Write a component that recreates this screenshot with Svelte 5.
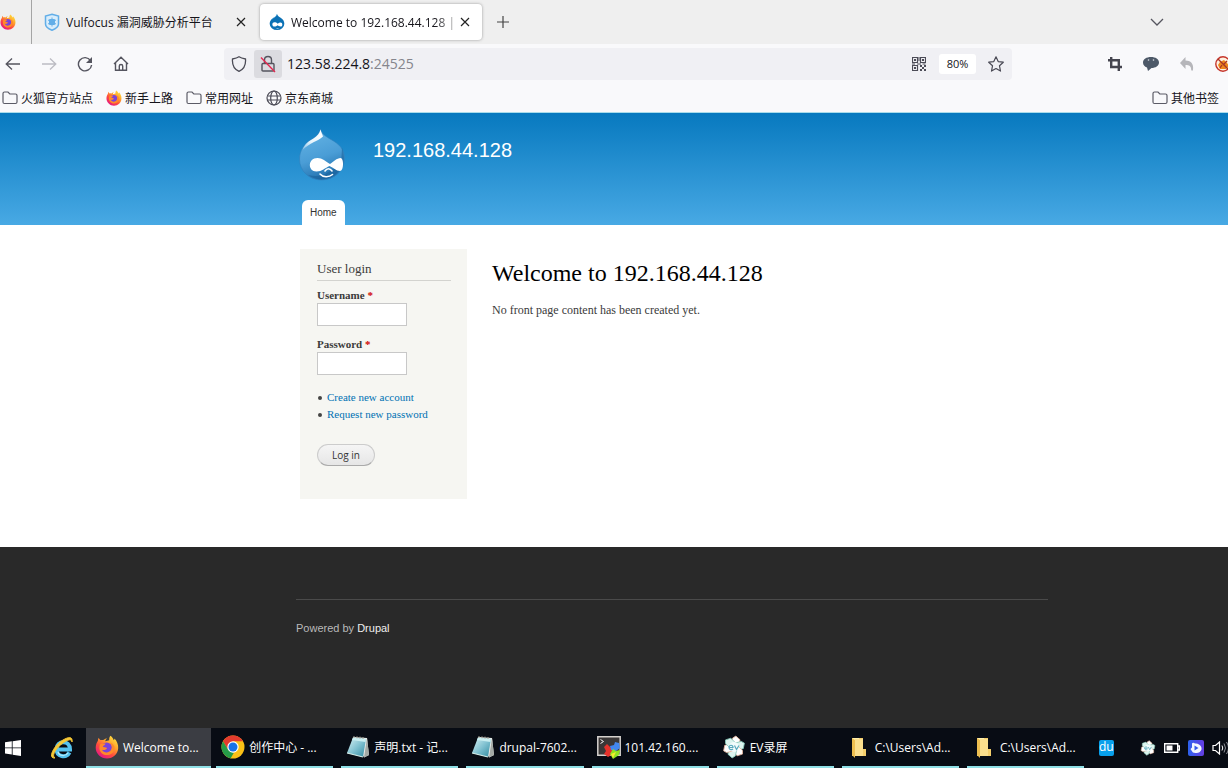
<script>
  const bookmarks = [
    { label: '火狐官方站点', icon: 'folder' },
    { label: '新手上路', icon: 'firefox' },
    { label: '常用网址', icon: 'folder' },
    { label: '京东商城', icon: 'globe' }
  ];
  const tasks = [
    { label: 'Welcome to...', icon: 'firefox', active: true },
    { label: '创作中心 - ...', icon: 'chrome' },
    { label: '声明.txt - 记...', icon: 'notepad' },
    { label: 'drupal-7602...', icon: 'notepad' },
    { label: '101.42.160....', icon: 'xshell' },
    { label: 'EV录屏', icon: 'ev' },
    { label: 'C:\\Users\\Ad...', icon: 'explorer' },
    { label: 'C:\\Users\\Ad...', icon: 'explorer' }
  ];
  const petals = [0, 60, 120, 180, 240, 300];
</script>

{#snippet icon(name, size)}
  {#if name === 'firefox'}
    <svg width={size} height={size} viewBox="0 0 24 24" aria-hidden="true">
      <defs>
        <linearGradient id="ff-body" x1="0.85" y1="0.05" x2="0.2" y2="0.95">
          <stop offset="0" stop-color="#ffe141" /><stop offset="0.35" stop-color="#ffa02c" />
          <stop offset="0.65" stop-color="#ff4b3d" /><stop offset="1" stop-color="#e31587" />
        </linearGradient>
      </defs>
      <path fill="url(#ff-body)" d="M15.4 0.8c2 1.300 2.900 3 3.300 4.500 0.600-0.400 0.800-1.200 0.800-1.900 2.400 2.500 3.900 6 3.700 9.600-0.300 6-5.200 10.500-11.200 10.500S0.700 18.800 0.700 12.700c0-3 1-5.300 2.200-7 0-1 0.200-2.100 0.800-3 0.300 1 0.900 1.800 1.700 2.400 0.900-0.300 2-0.300 2.900 0 1-1 2.300-1.600 3.700-1.600-1.100 0.800-1.700 1.700-1.800 2.700l4-1c-0.100-1.600 0.200-3.200 1.200-4.400z" />
      <circle cx="11.600" cy="12.800" r="5.400" fill="#7b43d8" />
      <path fill="#ff8a2a" d="M5.500 8.800c2 0.200 3-0.800 5-0.200-0.300 1.700-2 1.900-2.800 2.800 0.800 1 2.800 0.600 4.400 1.500-0.700 1.800-3 2.500-5 1.900 1.500 3.400 6.700 3.600 8.900 0.200 1.500-2.400 0.900-5.600-1.200-7.200 3.500 0.500 5.300 3.600 4.600 6.800-0.800 3.500-4 5.600-7.700 5.500-4.300-0.100-7.700-3.700-7.300-7.900 0.100-1.400 0.400-2.500 1.100-3.400z" />
    </svg>
  {:else if name === 'folder'}
    <svg width={size} height={size} viewBox="0 0 16 16" fill="none" stroke="#5b5b66" stroke-width="1.200" aria-hidden="true">
      <path d="M1 3.500q0-1.500 1.500-1.500h3.500l1.800 2h5.700q1.500 0 1.500 1.500v6.500q0 1.500-1.500 1.500h-11q-1.500 0-1.500-1.500z" />
    </svg>
  {:else if name === 'globe'}
    <svg width={size} height={size} viewBox="0 0 16 16" fill="none" stroke="#4b4b56" stroke-width="1.200" aria-hidden="true">
      <circle cx="8" cy="8" r="7" /><ellipse cx="8" cy="8" rx="3.300" ry="7" /><path d="M1.500 6h13M1.500 10h13" />
    </svg>
  {:else if name === 'chrome'}
    <svg width={size} height={size} viewBox="0 0 24 24" aria-hidden="true">
      <circle cx="12" cy="12" r="11.500" fill="#fbc116" />
      <path fill="#e33b2e" d="M2 6.300a11.500 11.500 0 0 1 20 0H12L7.200 14.800z" />
      <path fill="#259b48" d="M2 6.300 7.200 14.800 12 17.500l1 0-3.300 5.800A11.500 11.500 0 0 1 2 6.300z" />
      <circle cx="12" cy="12" r="5.700" fill="#fff" /><circle cx="12" cy="12" r="4.500" fill="#1a73e8" />
    </svg>
  {:else if name === 'notepad'}
    <svg width={size} height={size} viewBox="0 0 24 24" aria-hidden="true">
      <defs>
        <linearGradient id="np" x1="0" y1="0" x2="1" y2="1">
          <stop offset="0" stop-color="#d9f2f4" /><stop offset="0.500" stop-color="#83c3d2" /><stop offset="1" stop-color="#2f8aa0" />
        </linearGradient>
      </defs>
      <path fill="#e9ecea" d="M7 2l14 1 2 17-5 2.500z" /><path fill="#a4aaa5" d="M21 3l2 17-5 2.500z" />
      <path fill="url(#np)" d="M7 2.500 20 4l-3 18L1 18z" />
      <path fill="#c9eef0" d="M7 2.500 20 4l-0.500 3L6 5z" />
      <path d="M1 18l16 4" stroke="#d8efea" stroke-width="1.200" />
      <path d="M8 1v2M11 1.300v2M14 1.600v2M17 2v2" stroke="#a6a293" />
    </svg>
  {:else if name === 'xshell'}
    <svg width={size} height={size} viewBox="0 0 24 24" aria-hidden="true">
      <path fill="#3a3737" stroke="#d5d2ce" stroke-width="1.500" d="M0.800 1.800h22.400v18.400H0.800z" />
      <path d="M3.500 4.500l3 2-3 2" stroke="#f5f5f5" fill="none" />
      <path fill="#e5322b" d="M7 12l3-3 4 4 3 1-1 5-5 3-4-3 2-3z" />
      <path fill="#4287ef" d="M13 11l4-1 1-3 4 1 1 5-4 3-5-1z" />
      <path fill="#8fe322" d="M13 19l3-5 3 2 4-1-1 5-6 4z" /><path fill="#f7ec31" d="M14 19l5-2-3 6z" />
    </svg>
  {:else if name === 'ev'}
    <svg width={size} height={size} viewBox="0 0 24 24" aria-hidden="true">
      {#each petals as angle}
        <path d="M8.500 10V3.500L11 1l5 2.500V10z" fill={angle % 120 ? '#dcf4ee' : '#fff'} stroke={angle % 120 ? '#87c9b9' : '#e6b8a0'} stroke-width="0.800" stroke-linejoin="round" transform="rotate({angle + 15} 12 12)" />
      {/each}
      <circle cx="12" cy="12" r="5" fill="#f2fcfb" />
      <path d="M7 12.500h4c0-3-4-3-4 0 0 2.500 3 2.500 4 1.500M12.500 10.500l2 4 2.500-4" fill="none" stroke="#59a9bd" stroke-width="1.200" />
    </svg>
  {:else if name === 'explorer'}
    <svg width={size} height={size} viewBox="0 0 24 24" aria-hidden="true">
      <path fill="#f5cf6c" d="M5 3h11v11h3v7H5z" /><path fill="#fff0ac" d="M5 3h7v17H5z" />
      <path fill="#eebf50" d="M5 3l3 2v18l-3-3z" /><path fill="#fbdf8d" d="M8 4h8v17H8z" />
    </svg>
  {:else if name === 'drop'}
    <svg width={size} height={size} viewBox="0 0 24 24" aria-hidden="true">
      <path fill="#0b71b5" d="M12 0c1 3 3 4 5.500 5.500 3.500 2.200 5.500 5 5.500 9A11 9.500 0 0 1 1 14.500C1 11 3 8 6.500 6 9 4.500 11 3 12 0z" />
      <path fill="#5db6e7" d="M12 0c0 4-5 5-8 9C5.500 5 10 5 12 0z" />
      <path fill="#fff" d="M5 15.500c0-4 5-4 8-1 3-2.500 7-3 7 1.500 0 4-5 3-7 1-3 2.500-8 3-8-1.500zM10 20.500q3.500 1.500 6 0-3 3-6 0z" />
    </svg>
  {/if}
{/snippet}

<div class="screen">
  <header class="browser">
    <div class="tabs">
      <div class="pinned">{@render icon('firefox', 16)}</div>
      <div class="tab">
        <svg width="16" height="18" viewBox="0 0 16 18" fill="none" stroke="#62aee8" aria-hidden="true">
          <path fill="#d9edfb" stroke-width="1.500" d="M8 1.300 14.500 3v8c0 3-3.500 5-6.500 6.200C5 16 1.500 14 1.500 11V3z" />
          <path fill="#62aee8" d="M5.500 6.500h5v5h-5z" /><path d="M8 4.500v9M4 7l8 4M12 7l-8 4" />
        </svg>
        <span class="title">Vulfocus 漏洞威胁分析平台</span>
        <button class="close" aria-label="Close tab"><svg width="10" height="10" viewBox="0 0 10 10"><path d="M1 1l8 8M9 1 1 9" stroke="#222" stroke-width="1.200" /></svg></button>
      </div>
      <div class="tab current">
        {@render icon('drop', 16)}
        <span class="title clipped">Welcome to 192.168.44.128 |</span>
        <button class="close" aria-label="Close tab"><svg width="10" height="10" viewBox="0 0 10 10"><path d="M1 1l8 8M9 1 1 9" stroke="#222" stroke-width="1.200" /></svg></button>
      </div>
      <button class="new" aria-label="New tab"><svg width="12" height="12" viewBox="0 0 12 12"><path d="M6 0v12M0 6h12" stroke="#444" stroke-width="1.200" /></svg></button>
      <button class="list" aria-label="List tabs"><svg width="14" height="8" viewBox="0 0 14 8" fill="none"><path d="M1 1l6 6 6-6" stroke="#55555f" stroke-width="1.300" /></svg></button>
    </div>

    <div class="nav">
      <div class="controls">
        <button aria-label="Back"><svg width="16" height="16" viewBox="0 0 16 16" fill="none" stroke="#55555f" stroke-width="1.300"><path d="M15 8H1.500M7 2.500 1.200 8 7 13.500" /></svg></button>
        <button aria-label="Forward"><svg width="16" height="16" viewBox="0 0 16 16" fill="none" stroke="#bcbcc3" stroke-width="1.300"><path d="M1 8h13.500M9 2.500l5.800 5.500L9 13.500" /></svg></button>
        <button aria-label="Reload"><svg width="16" height="16" viewBox="0 0 16 16" fill="none" stroke="#55555f" stroke-width="1.400"><path d="M13.500 4.500A6.600 6.600 0 1 0 14.600 9" /><path fill="#55555f" stroke="none" d="M15 1v6H9z" /></svg></button>
        <button aria-label="Home"><svg width="16" height="16" viewBox="0 0 16 16" fill="none" stroke="#55555f" stroke-width="1.400"><path d="M1 8l7-6.800L15 8M2.500 7v7.300h11V7M6.300 14v-4q0-1.500 1.700-1.500t1.700 1.500v4" /></svg></button>
      </div>
      <div class="url">
        <span class="shield"><svg width="16" height="16" viewBox="0 0 16 16" fill="none" stroke="#4b4b56" stroke-width="1.300" aria-hidden="true"><path d="M8 0.800c2 1.400 4 1.800 6.500 2.200C15 9 12.500 13.300 8 15.300 3.500 13.300 1 9 1.500 3 4 2.600 6 2.200 8 0.800z" /></svg></span>
        <span class="lock"><svg width="16" height="18" viewBox="0 0 16 18" fill="none" stroke="#55555f" stroke-width="1.400" aria-hidden="true"><path d="M3 8.500h10q1 0 1 1v5.500q0 1-1 1H3q-1 0-1-1V9.500q0-1 1-1zM4.500 8.500V5q0-3.500 3.500-3.500T11.500 5v3.500" /><path d="M1 2.500 15 17" stroke="#e22850" /></svg></span>
        <span class="address">123.58.224.8<i>:24525</i></span>
        <svg width="14" height="14" viewBox="0 0 14 14" fill="none" stroke="#4b4b56" aria-hidden="true">
          <path d="M0.500 0.500h5v5h-5zM8.500 0.500h5v5h-5zM0.500 8.500h5v5h-5z" stroke-width="1.200" />
          <path fill="#4b4b56" stroke="none" d="M2 2h2v2H2zM10 2h2v2h-2zM2 10h2v2H2zM6.500 0h1v4h-1zM0 6.500h3v1H0zM5 6.500h4v1H5zM8 8h2v2H8zM10 10h2v2h-2zM12 8h2v2h-2zM12 12h2v2h-2zM8 12h2v2H8zM10.500 6.500h3v1h-3z" />
        </svg>
        <button class="zoom">80%</button>
        <button class="star" aria-label="Bookmark"><svg width="16" height="16" viewBox="0 0 16 16" fill="none" stroke="#4b4b56" stroke-width="1.200" stroke-linejoin="round"><path d="M8 0.800l2.200 4.800 5.100 0.600-3.800 3.600 1 5.300L8 12.500l-4.500 2.600 1-5.300L0.700 6.200l5.100-0.600z" /></svg></button>
      </div>
      <div class="extras">
        <button aria-label="Capture"><svg width="14" height="14" viewBox="0 0 14 14" fill="none" stroke="#45454f" stroke-width="2.400"><path d="M3.200 0v10H14M0 3.200h10.800V14" /></svg></button>
        <button aria-label="Chat"><svg width="18" height="16" viewBox="0 0 18 16"><path fill="#4d5968" d="M9 1c4.500 0 8 2.200 8 5.500S13.500 12 9.500 12L6 15l-1-3.500C2.500 10.500 1 9 1 6.500 1 3.200 4.500 1 9 1z" /><circle cx="6.500" cy="4" r="0.800" fill="#dfe4ea" /><circle cx="11.500" cy="4" r="0.800" fill="#dfe4ea" /></svg></button>
        <button aria-label="Undo"><svg width="16" height="16" viewBox="0 0 16 16"><path fill="#b6b6ba" d="M6.500 1v3.500c5 0 8.500 3 7.500 9.500-0.300 1-1.500 1-1.800 0 0-4-2-5-5.700-5V13L1 7z" /></svg></button>
        <button aria-label="Block scripts"><svg width="16" height="16" viewBox="0 0 16 16"><circle cx="8" cy="8" r="7.200" fill="#fff1df" stroke="#c5352b" stroke-width="1.400" /><path fill="#ed861e" d="M3 9l2-3 4-2 3 3 2 3-3 3H5z" /><path d="M3 3l10 10M5 12l2-3M9 8l3-3" stroke="#a5352a" stroke-width="1.300" /></svg></button>
      </div>
    </div>

    <nav class="bookmarks">
      {#each bookmarks as mark}
        <a href="#top">{@render icon(mark.icon, 16)}<span>{mark.label}</span></a>
      {/each}
      <a class="other" href="#top">{@render icon('folder', 16)}<span>其他书签</span></a>
    </nav>
  </header>

  <section class="banner wide">
    <div class="brand">
      <svg width="48" height="54" viewBox="0 0 48 54" aria-hidden="true">
        <defs>
          <linearGradient id="dr" x1="0.300" y1="0" x2="0.600" y2="1">
            <stop offset="0" stop-color="#64b3e4" /><stop offset="0.550" stop-color="#4a9dd6" /><stop offset="1" stop-color="#1e6dab" />
          </linearGradient>
          <linearGradient id="sh" x1="1" y1="0" x2="0" y2="1">
            <stop offset="0" stop-color="#fff" /><stop offset="0.600" stop-color="#e6f4fc" /><stop offset="1" stop-color="#fff" stop-opacity="0.200" />
          </linearGradient>
        </defs>
        <path fill="url(#dr)" stroke="#2f80bc" stroke-width="0.600" d="M22.500 1c1 5 5.500 7.500 10.500 10.500C41 16 46.500 21 46.500 30 46.500 43 36 52 23.500 52 11 52 1.500 43 1.500 31c0-8 4.500-15 11-19 5-3 9-5.500 10-11z" />
        <path fill="url(#sh)" d="M22.500 1.500c1.300 4.500 2 5 2.500 7-5.500 5-13 6-20.500 13.500C7 15 11 13.500 15.500 10.500c4-2.500 6-5 7-9z" />
        <path fill="#155c94" opacity="0.500" d="M44 20c3 8 3 17-4 24-9 9-22 9-30 3 8 2 16 1 20-3l13-7z" />
        <path fill="#fff" d="M19.500 30c5 0 8 3.500 12.500 6 3-2 7-6 10.500-6 3.500 0 3.500 13-0.500 13-4 0-6.500-3.500-10.500-5C27 40 24 43.500 18.500 43.500c-9 0-9-13.500 1-13.500z" />
        <path fill="none" stroke="#fff" stroke-width="1.600" stroke-linecap="round" d="M27 43c2-3 5-3 7 0M22 46c3 3.500 9 3.500 12.500 0.500" />
      </svg>
      <a class="site" href="#top">192.168.44.128</a>
    </div>
    <a class="home" href="#top">Home</a>
  </section>

  <main class="wide">
    <form class="login" onsubmit={(e) => e.preventDefault()}>
      <h2>User login</h2>
      <label for="user">Username <b>*</b></label>
      <input id="user" type="text" />
      <label for="pass">Password <b>*</b></label>
      <input id="pass" type="password" />
      <ul>
        <li><a href="#top">Create new account</a></li>
        <li><a href="#top">Request new password</a></li>
      </ul>
      <button class="submit">Log in</button>
    </form>
    <article>
      <h1>Welcome to 192.168.44.128</h1>
      <p>No front page content has been created yet.</p>
    </article>
  </main>

  <footer class="wide">
    <p>Powered by <a href="#top">Drupal</a></p>
  </footer>

  <div class="taskbar">
    <button class="start" aria-label="Start"><svg width="16" height="16" viewBox="0 0 16 16" fill="#fff"><path d="M0 2.200 6.800 1.300v6.200H0zM7.600 1.200 16 0v7.500H7.600zM0 8.300h6.800v6.200L0 13.600zM7.600 8.300H16V16l-8.400-1.200z" /></svg></button>
    <button class="ie" aria-label="Internet Explorer">
      <svg width="24" height="24" viewBox="0 0 24 24" fill="none">
        <path d="M19.500 16.500c-3.500 6-13 4.500-13-3.500 0-9 13.500-9.500 13.500 0.500H8" stroke="#55c3ef" stroke-width="4" />
        <path d="M18 17c-3 4-9 3-10-1" stroke="#b5eafa" stroke-width="1.200" />
        <path d="M5 22c-8 1-1-13 8-18 5-3 10-4 9 2 0-4-5-2-9 1C6 12 1 20 5 22z" fill="#f7cb3b" stroke="#f2c331" />
      </svg>
    </button>
    <div class="tasks">
      {#each tasks as task}
        <button class="task" class:active={task.active}>
          {@render icon(task.icon, 24)}<span>{task.label}</span>
        </button>
      {/each}
    </div>
    <div class="tray">
      <span class="du">du</span>
      {@render icon('ev', 16)}
      <svg width="16" height="10" viewBox="0 0 16 10" aria-hidden="true"><path d="M0.700 0.700h13v8.600h-13zM14 3h1.500v4H14" fill="none" stroke="#fff" stroke-width="1.400" /><path fill="#fff" d="M2.500 2.500h6v5h-6z" /></svg>
      <svg width="16" height="16" viewBox="0 0 16 16" aria-hidden="true">
        <defs><linearGradient id="pl"><stop stop-color="#2c62ed" /><stop offset="1" stop-color="#653de2" /></linearGradient></defs>
        <rect width="16" height="16" rx="2" fill="url(#pl)" /><path fill="#f2f8ff" d="M4 3.500Q5 2 7 3.500 9 3 11 4.500q3 2 2.500 5-1.500 3.500-5 3.500-4 0.500-5-2.500l-1-1.500 1.500-1.500z" /><path fill="#345ae9" d="M6.500 5.500 10.500 8l-4 2.500z" />
      </svg>
      <svg width="18" height="14" viewBox="0 0 18 14" fill="none" stroke="#fff" aria-hidden="true"><path d="M1 4.500h2.500L7.500 1v12L3.500 9.500H1z" stroke-width="1.200" /><path d="M10 4.500q1.500 2.500 0 5" /><path d="M12 2.500q3 4.500 0 9M14.500 1q4 6 0 12" stroke="#8c8f96" /></svg>
    </div>
  </div>
</div>

<style>
  :global(body) { margin: 0; }
  .screen {
    min-height: 100vh;
    display: flex;
    flex-direction: column;
    overflow: hidden;
    background: #fff;
    font: 12px/16px "Open Sans", "Noto Sans CJK SC", sans-serif;
    color: #15141a;
  }
  button { border: 0; padding: 0; background: none; font: inherit; color: inherit; display: flex; align-items: center; justify-content: center; }
  svg { flex: none; display: block; }
  a { color: inherit; text-decoration: none; }
  .title, .bookmarks span, .task span { padding-top: 2px; }
  .browser { background: #f9f9fb; border-bottom: 1px solid #a9dceb; }
  .tabs { height: 44px; background: #efefef; display: flex; align-items: center; }
  .pinned { width: 31px; height: 44px; border-right: 1px solid #a5a5a5; display: flex; align-items: center; }
  .tab { box-sizing: border-box; width: 222px; height: 36px; padding: 0 8px 0 12px; display: flex; align-items: center; gap: 6px; white-space: nowrap; }
  .current { margin-left: 6px; padding: 0 12px 0 9px; background: #fff; border-radius: 4px; box-shadow: 0 0 3px #999; }
  .title { flex: 1; min-width: 0; overflow: hidden; }
  .clipped { background: linear-gradient(90deg, #15141a 88%, #aaa); background-clip: text; color: transparent; }
  .new { width: 42px; height: 32px; }
  .list { width: 32px; height: 32px; margin-left: auto; margin-right: 55px; }
  .nav { height: 40px; display: flex; align-items: center; }
  .controls { width: 229px; margin-left: -5px; display: flex; }
  .controls button, .extras button { flex: none; width: 36px; height: 32px; }
  .url { flex: 1; height: 32px; background: #f0f0f4; border-radius: 4px; display: flex; align-items: center; overflow: hidden; }
  .shield { width: 30px; display: flex; justify-content: center; }
  .lock { width: 28px; height: 28px; background: #dbdbe0; border-radius: 3px; display: flex; align-items: center; justify-content: center; }
  .address { flex: 1; padding-left: 5px; font-size: 14px; line-height: 20px; }
  .address i { font-style: normal; color: #85858d; }
  .zoom { width: 37px; height: 20px; margin-left: 13px; border-radius: 3px; background: #fff; font-size: 11px; }
  .star { width: 32px; height: 32px; margin: 0 0 0 4px; }
  .extras { box-sizing: border-box; width: 216px; padding-left: 85px; display: flex; overflow: hidden; }
  .bookmarks { height: 28px; padding: 0 9px 0 2px; display: flex; align-items: center; gap: 13px; white-space: nowrap; }
  .bookmarks a { display: flex; align-items: center; gap: 3px; }
  .bookmarks .other { margin-left: auto; }

  .wide { padding-left: 296px; padding-right: 180px; }
  .banner { height: 112px; background: linear-gradient(#0779bf, #48a9e4); display: flex; flex-direction: column; justify-content: space-between; align-items: flex-start; }
  .brand { display: flex; gap: 27px; padding: 15px 0 0 2px; }
  .site { margin-top: 10px; color: #fff; font: 20px/24px "Liberation Sans", sans-serif; }
  .home { margin-left: 6px; padding: 0 8px; border-radius: 6px 6px 0 0; background: #fff; color: #333; font: 10px/25px "Liberation Sans", sans-serif; }

  main { display: flex; align-items: flex-start; gap: 25px; padding-top: 24px; padding-bottom: 48px; font: 12px/16px "Liberation Serif", serif; color: #3b3b3b; }
  .login { box-sizing: border-box; width: 167px; height: 250px; margin-left: 4px; padding: 11px 16px 0 17px; background: #f6f6f2; display: flex; flex-direction: column; align-items: flex-start; }
  h2 { align-self: stretch; margin: 0 0 6px; padding-bottom: 3px; border-bottom: 1px solid #d3d3cf; font-size: 13px; font-weight: 400; line-height: 17px; }
  label { font-size: 11px; line-height: 16px; font-weight: 700; }
  label b { color: #d00000; }
  input { box-sizing: border-box; width: 90px; height: 23px; margin: 0 0 10px; border: 1px solid #c8c8c8; background: #fff; }
  ul { margin: 4px 0 21px; padding-left: 10px; font-size: 11px; line-height: 17px; }
  li { list-style: none; display: flex; align-items: center; }
  li::before { content: ""; width: 4px; height: 4px; margin: 0 5px 0 -9px; border-radius: 50%; background: #444; }
  li a { color: #0071b3; }
  .submit { width: 58px; height: 22px; border: 1px solid #ccc; border-bottom-color: #aaa; border-radius: 11px; background: linear-gradient(#f5f5f5, #e6e6e6); color: #333; font: 10px/14px "Open Sans", sans-serif; }
  h1 { margin: 9px 0 13px; color: #000; font-size: 24px; line-height: 31px; font-weight: 400; }
  p { margin: 0; }
  footer { flex: 1; background: #292929; color: #b9b9b9; font: 11px/16px "Liberation Sans", sans-serif; }
  footer p { margin-top: 52px; padding-top: 20px; border-top: 1px solid #4a4a4a; }
  footer a { color: #eee; }

  .taskbar { height: 40px; background: #080c14; color: #fff; display: flex; }
  .start { flex: none; width: 26px; }
  .ie { flex: none; box-sizing: border-box; width: 60px; padding-left: 12px; }
  .tasks { flex: 1; min-width: 0; display: grid; grid-template-columns: repeat(8, 1fr); }
  .task { min-width: 0; margin: 0 3px 0 5px; padding-left: 5px; gap: 4px; justify-content: flex-start; border-bottom: 2px solid #8fe0e6; white-space: nowrap; }
  .task.active { margin: 0; padding-left: 9px; background: #3b3d43; }
  .tray { flex: none; box-sizing: border-box; width: 141px; padding-left: 12px; display: flex; align-items: center; gap: 8px; }
  .du { width: 16px; height: 16px; margin-right: 18px; border-radius: 2px; background: #08a0ec; line-height: 14px; text-align: center; }
</style>
